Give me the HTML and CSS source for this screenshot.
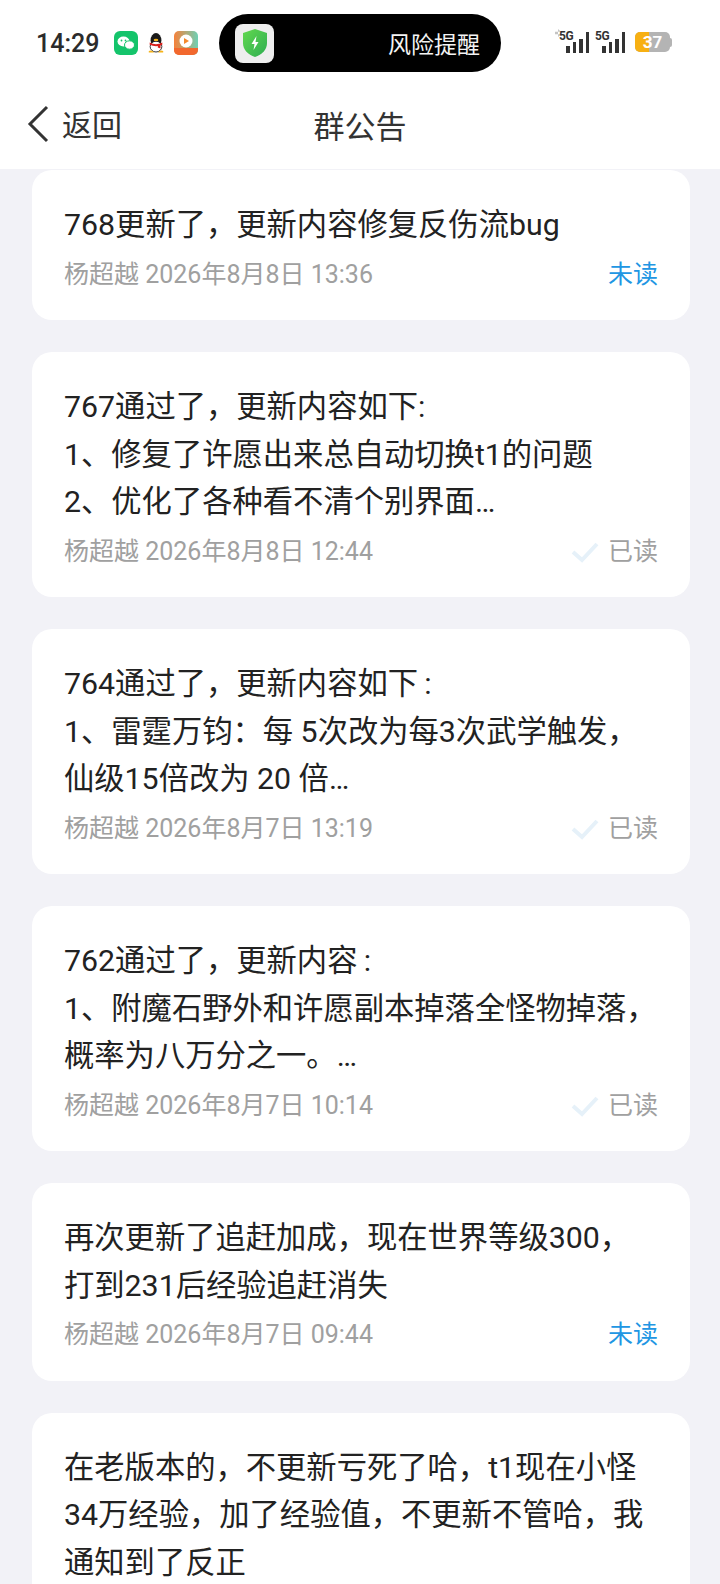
FILE: index.html
```html
<!DOCTYPE html>
<html lang="zh-CN">
<head>
    <meta charset="UTF-8">
    <meta name="viewport" content="width=device-width, initial-scale=1.0">
    <title>群公告</title>
    <link rel="stylesheet" href="styles.css">
</head>
<body>
    <header class="top">
        <div class="status-bar">
            <span class="clock">14:29</span>
            <div class="app-icons">
                <svg width="24" height="24" viewBox="0 0 24 24">
                    <rect width="24" height="24" rx="6" fill="#14c46b"/>
                    <ellipse cx="9.5" cy="10.5" rx="6" ry="5" fill="#fff"/>
                    <ellipse cx="15.5" cy="14" rx="5" ry="4.2" fill="#fff" stroke="#14c46b"/>
                    <circle cx="7.5" cy="9.5" r="0.9" fill="#14c46b"/>
                    <circle cx="11.5" cy="9.5" r="0.9" fill="#14c46b"/>
                </svg>
                <svg width="18" height="24" viewBox="0 0 20 24">
                    <ellipse cx="10" cy="9" rx="6" ry="8" fill="#1a1a1a"/>
                    <ellipse cx="10" cy="16" rx="6.5" ry="6" fill="#fff" stroke="#222" stroke-width="1"/>
                    <path d="M3 11.5q7 3.5 14 0v2.5q-7 3-14 0z" fill="#d8201c"/>
                    <path d="M12 14l3 0 0 4-3-1z" fill="#d8201c"/>
                    <ellipse cx="10" cy="8.6" rx="2.6" ry="1.3" fill="#f5b31a"/>
                    <path d="M2 21q3-2 6 1.500h-6zM18 21q-3-2-6 1.500h6z" fill="#f5b31a"/>
                </svg>
                <svg width="24" height="24" viewBox="0 0 24 24">
                    <defs>
                        <linearGradient id="vidBg" x1="0" y1="0" x2="1" y2="0">
                            <stop offset="0" stop-color="#f6813a"/>
                            <stop offset="1" stop-color="#6fd0b4"/>
                        </linearGradient>
                    </defs>
                    <rect width="24" height="24" rx="5" fill="url(#vidBg)"/>
                    <path d="M0 17h24v2a5 5 0 0 1-5 5H5a5 5 0 0 1-5-5z" fill="#f2682e"/>
                    <circle cx="12" cy="10" r="6.500" fill="#fff"/>
                    <path d="M10 7l5 3-5 3z" fill="#f58a2e"/>
                </svg>
            </div>
            <div class="island">
                <div class="shield-tile">
                    <svg width="26" height="30" viewBox="0 0 26 30">
                        <defs>
                            <linearGradient id="shieldBg" x1="0" y1="0" x2="1" y2="1">
                                <stop offset="0" stop-color="#62d84e"/>
                                <stop offset="1" stop-color="#2fae52"/>
                            </linearGradient>
                        </defs>
                        <path d="M13 1l12 4v10c0 7-5 11.500-12 14C6 26.500 1 22 1 15V5z" fill="url(#shieldBg)"/>
                        <path d="M14.500 8l-5 8h3l-1 6 5-8h-3z" fill="#fff"/>
                    </svg>
                </div>
                <span class="island-text">风险提醒</span>
            </div>
            <div class="status-right">
                <span class="updown"></span>
                <div class="signal">
                    <span class="net">5G</span>
                    <i class="b1"></i><i class="b2"></i><i class="b3"></i><i class="b4"></i>
                </div>
                <div class="signal">
                    <span class="net">5G</span>
                    <i class="b1"></i><i class="b2"></i><i class="b3"></i><i class="b4"></i>
                </div>
                <div class="battery"><span class="level"></span><span class="pct">37</span></div>
                <span class="battery-cap"></span>
            </div>
        </div>
        <nav class="nav">
            <a class="back">
                <svg width="24" height="38" viewBox="0 0 24 38">
                    <path d="M21 2L4 19l17 17" fill="none" stroke="#333" stroke-width="3"/>
                </svg>
                <span>返回</span>
            </a>
            <h1>群公告</h1>
        </nav>
    </header>

    <main class="list">
        <article class="card">
            <p>768更新了，更新内容修复反伤流bug</p>
            <div class="meta"><span>杨超越 2026年8月8日 13:36</span><span class="unread">未读</span></div>
        </article>
        <article class="card">
            <p>767通过了，更新内容如下:<br>1、修复了许愿出来总自动切换t1的问题<br>2、优化了各种看不清个别界面…</p>
            <div class="meta"><span>杨超越 2026年8月8日 12:44</span><span class="read"><svg class="tick" width="28" height="22" viewBox="0 0 28 22"><path d="M2 11l9 8L26 3" fill="none" stroke="#e6f1f9" stroke-width="4"/></svg>已读</span></div>
        </article>
        <article class="card">
            <p>764通过了，更新内容如下&#8201;:<br>1、雷霆万钧：每 5次改为每3次武学触发，<br>仙级15倍改为 20 倍…</p>
            <div class="meta"><span>杨超越 2026年8月7日 13:19</span><span class="read"><svg class="tick" width="28" height="22" viewBox="0 0 28 22"><path d="M2 11l9 8L26 3" fill="none" stroke="#e6f1f9" stroke-width="4"/></svg>已读</span></div>
        </article>
        <article class="card">
            <p>762通过了，更新内容&#8201;:<br>1、附魔石野外和许愿副本掉落全怪物掉落，<br>概率为八万分之一。…</p>
            <div class="meta"><span>杨超越 2026年8月7日 10:14</span><span class="read"><svg class="tick" width="28" height="22" viewBox="0 0 28 22"><path d="M2 11l9 8L26 3" fill="none" stroke="#e6f1f9" stroke-width="4"/></svg>已读</span></div>
        </article>
        <article class="card">
            <p>再次更新了追赶加成，现在世界等级300，<br>打到231后经验追赶消失</p>
            <div class="meta"><span>杨超越 2026年8月7日 09:44</span><span class="unread">未读</span></div>
        </article>
        <article class="card">
            <p>在老版本的，不更新亏死了哈，t1现在小怪<br>34万经验，加了经验值，不更新不管哈，我<br>通知到了反正</p>
        </article>
    </main>
</body>
</html>
```

FILE: styles.css
```css
* {
    box-sizing: border-box;
}

html, body {
    margin: 0;
    padding: 0;
}

body {
    width: 720px;
    height: 1584px;
    overflow: hidden;
    background-color: #f2f2f7;
    color: #222;
    font-family: Roboto, "Noto Sans CJK SC", sans-serif;
}

.top {
    height: 169px;
    background: #fff;
}

.status-bar {
    height: 86px;
    padding-left: 36px;
    display: flex;
    align-items: center;
}

.clock {
    font-size: 25px;
    font-weight: 500;
    color: #2b2b2b;
    width: 78px;
}

.app-icons {
    display: flex;
    align-items: center;
    gap: 9px;
    margin-top: -1px;
}

.island {
    width: 282px;
    height: 58px;
    margin-left: 21px;
    padding: 0 21px 0 16px;
    background: #000;
    border-radius: 29px;
    display: flex;
    align-items: center;
    justify-content: space-between;
}

.shield-tile {
    width: 39px;
    height: 39px;
    border-radius: 8px;
    background: #eee;
    display: flex;
    align-items: center;
    justify-content: center;
}

.island-text {
    color: #f4f4f4;
    font-size: 23px;
}

.status-right {
    margin-left: 54px;
    margin-top: -2px;
    display: flex;
    align-items: center;
}

.updown {
    width: 6px;
    height: 8px;
    margin: -18px -1px 0 0;
    background: #c4c4c4;
    clip-path: polygon(50% 0, 100% 35%, 0 35%, 0 65%, 100% 65%, 50% 100%);
}

.signal {
    position: relative;
    width: 29px;
    height: 22px;
    margin-right: 7px;
    display: flex;
    align-items: flex-end;
    justify-content: flex-end;
    gap: 3px;
}

.signal i {
    display: block;
    width: 3.5px;
    background: #333;
}

.signal .b1 { height: 7px; }
.signal .b2 { height: 11px; }
.signal .b3 { height: 14px; }
.signal .b4 { height: 21px; }

.net {
    position: absolute;
    left: -1px;
    top: -2px;
    font-size: 12px;
    font-weight: 700;
    letter-spacing: -0.5px;
    color: #333;
}

.battery {
    position: relative;
    width: 35px;
    height: 20px;
    margin-left: 3px;
    border-radius: 5px;
    background: #b4b4b4;
    overflow: hidden;
    text-align: center;
}

.level {
    position: absolute;
    left: 0;
    top: 0;
    bottom: 0;
    width: 14px;
    background: #f7b013;
}

.pct {
    position: relative;
    color: #fff;
    font-size: 17px;
    font-weight: 700;
    line-height: 20px;
}

.battery-cap {
    width: 2px;
    height: 9px;
    border-radius: 0 2px 2px 0;
    background: #b4b4b4;
}

.nav {
    position: relative;
    height: 83px;
    padding-bottom: 7px;
    display: flex;
    align-items: center;
    justify-content: center;
}

.back {
    position: absolute;
    left: 26px;
    top: 17px;
    display: flex;
    align-items: center;
    gap: 12px;
    font-size: 30px;
    color: #333;
}

.back span {
    margin-top: -2px;
}

.nav h1 {
    margin: 0;
    font-size: 31px;
    font-weight: 400;
    color: #333;
}

.list {
    padding: 1px 30px 0 32px;
    display: flex;
    flex-direction: column;
    gap: 32px;
}

.card {
    background: #fff;
    border-radius: 20px;
    padding: 31px 32px 25.500px;
}

.card p {
    margin: 0;
    font-size: 30.300px;
    line-height: 47.500px;
    color: #222;
}

.meta {
    display: flex;
    justify-content: space-between;
    align-items: center;
    margin-top: 6px;
    font-size: 25px;
    line-height: 40px;
    color: #a0a0a0;
}

.unread {
    color: #2196e3;
}

.read {
    display: flex;
    align-items: center;
    gap: 9px;
}

.tick {
    flex: none;
}
```
